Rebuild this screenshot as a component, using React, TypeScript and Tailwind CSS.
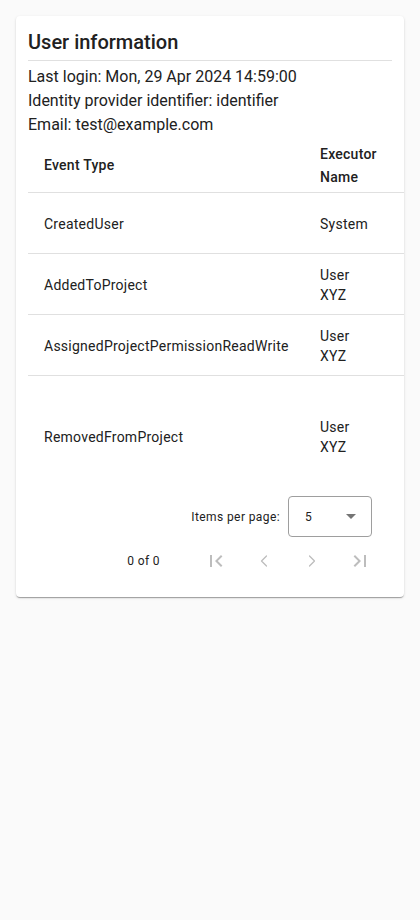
import { ChevronLeft, ChevronRight } from "lucide-react";

type EventRow = {
  eventType: string;
  executor: string;
  height: string;
  last?: boolean;
};

const rows: EventRow[] = [
  { eventType: "CreatedUser", executor: "System", height: "h-[61px]" },
  { eventType: "AddedToProject", executor: "User XYZ", height: "h-[61px]" },
  { eventType: "AssignedProjectPermissionReadWrite", executor: "User XYZ", height: "h-[61px]" },
  { eventType: "RemovedFromProject", executor: "User XYZ", height: "h-[120px]", last: true },
];

function FirstPageIcon() {
  return (
    <svg width="24" height="24" viewBox="0 0 24 24" fill="currentColor">
      <path d="M18.41 16.59L13.82 12l4.59-4.59L17 6l-6 6 6 6zM6 6h2v12H6z" />
    </svg>
  );
}

function LastPageIcon() {
  return (
    <svg width="24" height="24" viewBox="0 0 24 24" fill="currentColor">
      <path d="M5.59 7.41L10.18 12l-4.59 4.59L7 18l6-6-6-6zM16 6h2v12h-2z" />
    </svg>
  );
}

export default function App() {
  return (
    <main
      className="min-h-screen bg-[#fafafa] p-4 text-[#212121]"
      style={{ fontFamily: "Roboto, 'Liberation Sans', sans-serif" }}
    >
      <section className="overflow-hidden rounded-[4px] bg-white px-3 pb-3 pt-[10px] shadow-[0_2px_1px_-1px_rgba(0,0,0,0.2),0_1px_1px_0_rgba(0,0,0,0.14),0_1px_3px_0_rgba(0,0,0,0.12)]">
        <h1 className="text-[20px] font-medium leading-8">User information</h1>
        <div className="mt-[2px] border-t border-[#e0e0e0]" />
        <div className="pt-[4px] text-[16px] leading-6">
          <p>Last login: Mon, 29 Apr 2024 14:59:00</p>
          <p>Identity provider identifier: identifier</p>
          <p>Email: test@example.com</p>
        </div>

        {/* table is wider than the card, the card clips it */}
        <div className="mr-[-12px] tracking-[0.25px]">
          <div className="flex h-[56px] items-center border-b border-[#e0e0e0] pt-[2px] text-[14px] font-medium leading-[23px]">
            <div className="w-[292px] shrink-0 pl-4">Event Type</div>
            <div className="w-[58px] shrink-0">Executor Name</div>
          </div>
          {rows.map((row) => (
            <div
              key={row.eventType}
              className={`flex items-center pt-[1px] text-[14px] leading-5 ${row.height} ${row.last ? "" : "border-b border-[#e0e0e0]"}`}
            >
              <div className="w-[292px] shrink-0 pl-4">{row.eventType}</div>
              <div className="w-[58px] shrink-0">{row.executor}</div>
            </div>
          ))}
        </div>

        <div className="text-[12px] tracking-[0.4px] text-[#212121]">
          <div className="flex items-center justify-end pr-[20px]">
            <span className="mr-2">Items per page:</span>
            <div className="flex h-[41px] w-[84px] items-center justify-between rounded-[4px] border border-[#9e9e9e] pl-4 pr-[15px] text-[12px]">
              <span>5</span>
              <span className="h-0 w-0 border-x-[5px] border-t-[5px] border-x-transparent border-t-[#757575]" />
            </div>
          </div>
          <div className="flex h-[48px] items-center justify-end pr-2">
            <span className="mr-8">0 of 0</span>
            <div className="flex text-[#bdbdbd]">
              <span className="flex h-12 w-12 items-center justify-center">
                <FirstPageIcon />
              </span>
              <span className="flex h-12 w-12 items-center justify-center">
                <ChevronLeft size={20} strokeWidth={1.5} />
              </span>
              <span className="flex h-12 w-12 items-center justify-center">
                <ChevronRight size={20} strokeWidth={1.5} />
              </span>
              <span className="flex h-12 w-12 items-center justify-center">
                <LastPageIcon />
              </span>
            </div>
          </div>
        </div>
      </section>
    </main>
  );
}
